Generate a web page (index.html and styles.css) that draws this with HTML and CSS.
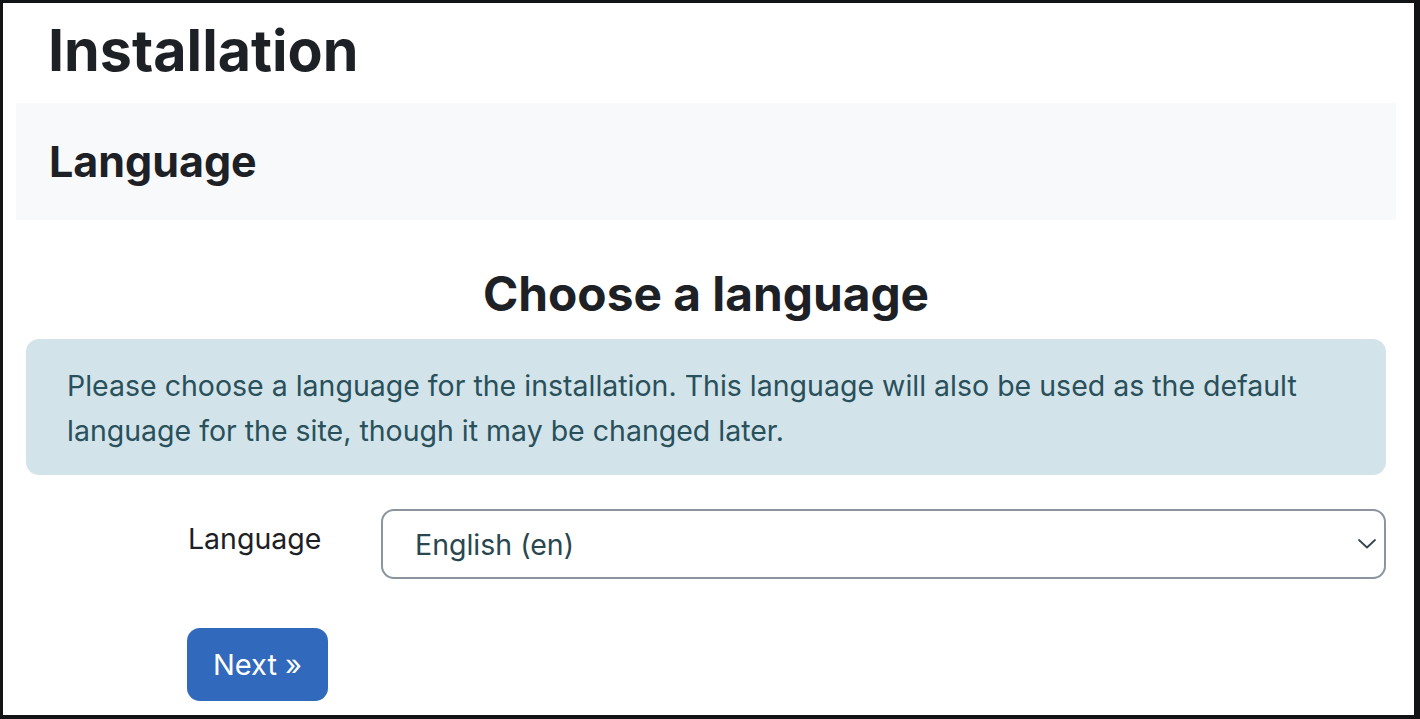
FILE: index.html
```html
<!DOCTYPE html>
<html lang="en">
<head>
<meta charset="utf-8">
<title>Installation</title>
<link rel="stylesheet" href="styles.css">
</head>
<body>
<div class="frame">
  <div class="page">
    <h1 class="title">Installation</h1>
    <div class="section-head">
      <h3 class="section-title">Language</h3>
    </div>
    <h2 class="choose">Choose a language</h2>
    <div class="alert">Please choose a language for the installation. This language will also be used as the default language for the site, though it may be changed later.</div>
    <div class="form-row">
      <label class="form-label">Language</label>
      <div class="select">
        <span class="select-value">English (en)</span>
        <svg class="chevron" width="18" height="10" viewBox="0 0 18 10"><path d="M1 1 L9 8.5 L17 1" fill="none" stroke="#344650" stroke-width="1.8" stroke-linecap="round" stroke-linejoin="round"/></svg>
      </div>
    </div>
    <div class="actions">
      <button class="btn">Next »</button>
    </div>
  </div>
</div>
</body>
</html>
```
FILE: styles.css
```css
html, body {
  margin: 0;
  padding: 0;
  background: #ffffff;
}
body {
  font-family: Inter, "Noto Sans", "Liberation Sans", sans-serif;
  color: #1d2125;
}
.frame {
  box-sizing: border-box;
  width: 1420px;
  height: 719px;
  border-style: solid;
  border-color: #111315;
  border-width: 3px 6px 4px 3px;
  overflow: hidden;
  background: #fff;
}
.page {
  padding: 0 18px 0 13px;
}
.title {
  margin: 11px 0 17px 0;
  padding-left: 32px;
  font-size: 57.4px;
  line-height: 72px;
  font-weight: 700;
  color: #1d2125;
}
.section-head {
  background: #f8f9fa;
  padding: 34px 33px 34px 33px;
}
.section-title {
  margin: 0;
  font-size: 43px;
  line-height: 49px;
  font-weight: 700;
  color: #1d2125;
}
.choose {
  margin: 44px 0 15px 0;
  text-align: center;
  font-size: 47.8px;
  line-height: 60px;
  font-weight: 700;
  color: #1d2125;
}
.alert {
  margin: 0 10px;
  background: #d2e4ea;
  color: #29505b;
  border-radius: 13px;
  padding: 24px 41px 22px 41px;
  font-size: 28.5px;
  line-height: 45px;
}
.form-row {
  display: flex;
  align-items: flex-start;
  margin: 34px 10px 0 171px;
}
.form-label {
  width: 194px;
  flex: 0 0 194px;
  padding-top: 11px;
  padding-left: 1px;
  box-sizing: border-box;
  font-size: 28.5px;
  line-height: 38px;
  color: #1d2125;
}
.select {
  flex: 1;
  box-sizing: border-box;
  height: 70px;
  border: 2px solid #8c959d;
  border-radius: 13px;
  display: flex;
  align-items: center;
  justify-content: space-between;
  padding: 0 6px 0 32px;
}
.select-value {
  font-size: 28.5px;
  color: #2a4750;
}
.chevron {
  display: block;
  margin-right: 2px;
}
.actions {
  margin: 49px 0 0 171px;
}
.btn {
  display: block;
  box-sizing: border-box;
  width: 141px;
  height: 73px;
  border: none;
  border-radius: 13px;
  background: #3169bd;
  color: #ffffff;
  font-family: Inter, "Noto Sans", "Liberation Sans", sans-serif;
  font-size: 29px;
  padding: 0;
  text-align: center;
}
```
